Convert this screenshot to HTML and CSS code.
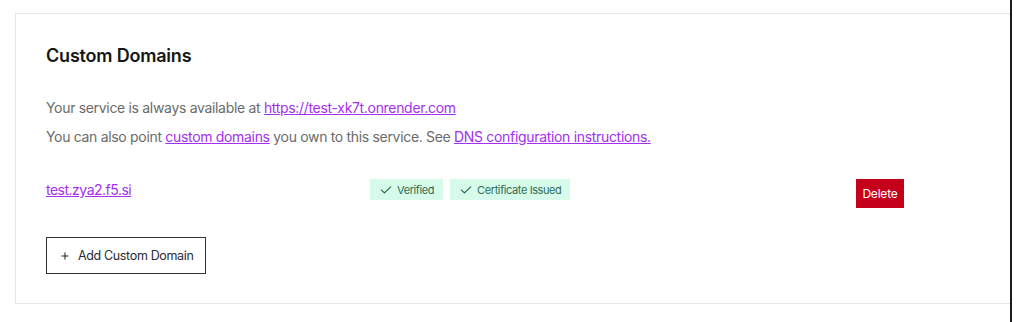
FILE: index.html
```html
<!DOCTYPE html>
<html lang="en">
<head>
<meta charset="utf-8">
<title>Custom Domains</title>
<link rel="stylesheet" href="styles.css">
</head>
<body>
<div class="page">
  <section class="card">
    <h2 class="title">Custom Domains</h2>
    <p class="text">Your service is always available at <a class="link" href="#">https://test-xk7t.onrender.com</a></p>
    <p class="text second">You can also point <a class="link" href="#">custom domains</a> you own to this service. See <a class="link" href="#">DNS configuration instructions.</a></p>
    <div class="domain-row">
      <a class="link domain" href="#">test.zya2.f5.si</a>
      <div class="badges">
        <span class="badge"><svg class="check" viewBox="0 0 12 8" width="12" height="8"><polyline points="1,3.6 4.4,7 11,0.6" fill="none" stroke="currentColor" stroke-width="1.2"/></svg>Verified</span>
        <span class="badge"><svg class="check" viewBox="0 0 12 8" width="12" height="8"><polyline points="1,3.6 4.4,7 11,0.6" fill="none" stroke="currentColor" stroke-width="1.2"/></svg>Certificate Issued</span>
      </div>
      <button class="delete" type="button">Delete</button>
    </div>
    <button class="add" type="button"><svg class="plus" viewBox="0 0 8 8" width="8" height="8"><path d="M4 0.5V7.5M0.5 4H7.5" fill="none" stroke="currentColor" stroke-width="1.1"/></svg>Add Custom Domain</button>
  </section>
</div>
<div class="rule"></div>
</body>
</html>
```

FILE: styles.css
```css
html, body {
  margin: 0;
  padding: 0;
  background: #ffffff;
}
body {
  display: flex;
  height: 322px;
  overflow: hidden;
  font-family: Inter, "Liberation Sans", sans-serif;
}
.page {
  width: 1010px;
  padding: 13px 0 0 15px;
  box-sizing: border-box;
}
.rule {
  width: 2px;
  height: 322px;
  background: #1b1b1b;
}
.card {
  border: 1px solid #e6e6e6;
  border-right: none;
  padding: 30px 30px 29px 30px;
}
.title {
  margin: 0 0 30px 0;
  font-size: 18px;
  line-height: 24px;
  font-weight: 600;
  letter-spacing: -0.2px;
  color: #161616;
}
.text {
  margin: 0;
  font-size: 14px;
  line-height: 20px;
  letter-spacing: -0.32px;
  color: #6b6b6b;
}
.text.second {
  margin-top: 9px;
}
.link {
  color: #a52ff2;
  text-decoration: underline;
}
.domain-row {
  display: grid;
  grid-template-columns: 324px 486px auto;
  align-items: start;
  margin-top: 32px;
}
.domain {
  margin-top: 2px;
  font-size: 14px;
  line-height: 18px;
  letter-spacing: -0.5px;
  justify-self: start;
}
.badges {
  display: flex;
  gap: 7px;
}
.badge {
  display: flex;
  align-items: center;
  gap: 5px;
  height: 21px;
  padding: 0 9px 0 10px;
  background: #d6fbea;
  color: #2f6c55;
  font-size: 11px;
  letter-spacing: -0.4px;
}
.check {
  display: block;
  flex-shrink: 0;
}
.delete {
  justify-self: start;
  width: 48px;
  height: 29px;
  border: none;
  background: #c5001a;
  color: #ffffff;
  font-family: inherit;
  font-size: 12px;
  letter-spacing: -0.2px;
  padding: 0;
}
.add {
  display: flex;
  align-items: center;
  margin-top: 29px;
  height: 37px;
  width: 160px;
  padding: 0 0 0 14px;
  background: #ffffff;
  border: 1px solid #333333;
  color: #2b2b33;
  font-family: inherit;
  font-size: 12.5px;
  letter-spacing: -0.35px;
  white-space: nowrap;
}
.plus {
  display: block;
  flex-shrink: 0;
  margin-right: 9px;
}
```
